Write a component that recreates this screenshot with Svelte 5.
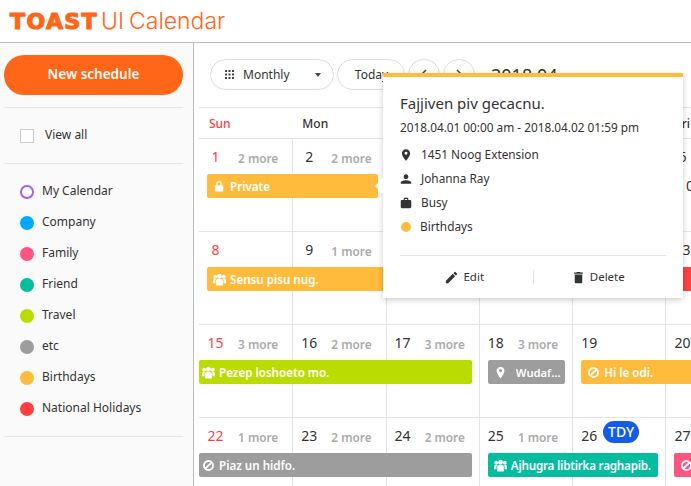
<script>
	const calendars = [
		{ name: 'My Calendar', color: '#9e5fff', ring: true },
		{ name: 'Company', color: '#00a9ff' },
		{ name: 'Family', color: '#ff5583' },
		{ name: 'Friend', color: '#03bd9e' },
		{ name: 'Travel', color: '#bbdc00' },
		{ name: 'etc', color: '#9d9d9d' },
		{ name: 'Birthdays', color: '#ffbb3b' },
		{ name: 'National Holidays', color: '#ff4040' }
	];

	const days = ['Sun', 'Mon', 'Tue', 'Wed', 'Thu', 'Fri', 'Sat'];

	const weeks = [
		{
			dates: [[1, 2], [2, 2], [3, 0], [4, 0], [5, 0], [6, 0], [7, 0]],
			events: []
		},
		{
			dates: [[8, 0], [9, 1], [10, 0], [11, 0], [12, 0], [13, 0], [14, 0]],
			events: [
				{ start: 1, span: 4, color: '#ffbb3b', icon: 'group', title: 'Sensu pisu nug.' },
				{ start: 5, span: 3, color: '#ff4040', icon: 'ban', title: 'Holiday' }
			]
		},
		{
			dates: [[15, 3], [16, 2], [17, 3], [18, 3], [19, 0], [20, 0], [21, 0]],
			events: [
				{ start: 1, span: 3, color: '#bbdc00', icon: 'group', title: 'Pezep loshoeto mo.', cont: true, drag: true },
				{ start: 4, span: 1, color: '#9d9d9d', icon: 'pin', title: 'Wudafv hoku bo.', drag: true, short: true },
				{ start: 5, span: 3, color: '#ffbb3b', icon: 'ban', title: 'Hi le odi.' }
			]
		},
		{
			dates: [[22, 1], [23, 2], [24, 2], [25, 1], [26, 0, true], [27, 0], [28, 0]],
			events: [
				{ start: 1, span: 3, color: '#9d9d9d', icon: 'ban', title: 'Piaz un hidfo.', cont: true },
				{ start: 4, span: 2, color: '#03bd9e', icon: 'group', title: 'Ajhugra libtirka raghapib.', drag: true, tight: true },
				{ start: 6, span: 2, color: '#ff5583', icon: 'ban', title: 'Ohe ditu.' }
			]
		}
	];
</script>

{#snippet eventIcon(name)}
	<svg class="ev-icon {name}" viewBox="0 0 14 14" fill="#fff">
		{#if name === 'group'}
			<circle cx="7" cy="3.4" r="2.5" />
			<circle cx="2.3" cy="4" r="2" />
			<circle cx="11.7" cy="4" r="2" />
			<path d="M3.4 13.500V8.500C3.4 6.900 4.600 6.300 7 6.300s3.600.6 3.600 2.200v5z" />
			<path d="M0 11V8c0-1.200.9-1.800 2.400-1.800.4 0 .7 0 1 .1-.5.5-.8 1.200-.8 2.100V11z" />
			<path d="M14 11V8c0-1.200-.9-1.800-2.400-1.800-.4 0-.7 0-1 .1.500.5.8 1.200.8 2.100V11z" />
		{:else if name === 'ban'}
			<circle cx="7" cy="7" r="4.9" fill="none" stroke="#fff" stroke-width="2" />
			<path d="M3.600 10.400l6.800-6.800" stroke="#fff" stroke-width="2" />
		{:else if name === 'pin'}
			<path d="M7 1C4.600 1 2.800 2.800 2.800 5.200 2.800 8.400 7 13.400 7 13.400s4.200-5 4.200-8.200C11.200 2.800 9.400 1 7 1zm0 5.800a1.600 1.600 0 1 1 0-3.200 1.600 1.600 0 0 1 0 3.200z" />
		{:else if name === 'lock'}
			<path d="M3 6h.8V4.300a3.200 3.200 0 0 1 6.400 0V6h.8c.6 0 1 .4 1 1v5.500c0 .6-.4 1-1 1H3c-.6 0-1-.4-1-1V7c0-.6.4-1 1-1zm2.200 0h3.600V4.300a1.800 1.800 0 0 0-3.600 0z" />
		{/if}
	</svg>
{/snippet}

<div class="page">
	<header class="top">
		<span class="logo-toast">TOAST</span>
		<span class="logo-ui">UI</span>
		<span class="logo-cal">Calendar</span>
	</header>

	<div class="body">
		<aside class="side">
			<button class="new-btn">New schedule</button>
			<div class="view-all">
				<span class="check"></span>
				<span class="lift">View all</span>
			</div>
			<ul class="cal-list">
				{#each calendars as c}
					<li>
						<span
							class="dot"
							class:ring={c.ring}
							style="border-color: {c.color}; background: {c.ring ? '#fff' : c.color}"
						></span>
						<span class="lift">{c.name}</span>
					</li>
				{/each}
			</ul>
		</aside>

		<main class="main">
			<div class="toolbar">
				<button class="pill monthly">
					<svg class="grid-ic" viewBox="0 0 9 9" fill="#444">
						{#each [0, 3.5, 7] as y}
							{#each [0, 3.5, 7] as x}
								<rect {x} {y} width="2" height="2" />
							{/each}
						{/each}
					</svg>
					<span>Monthly</span>
					<span class="caret"></span>
				</button>
				<button class="pill today">Today</button>
				<button class="pill round">
					<svg viewBox="0 0 10 14" width="10" height="14"><path d="M7 2L2 7l5 5" fill="none" stroke="#444" stroke-width="1.5" /></svg>
				</button>
				<button class="pill round">
					<svg viewBox="0 0 10 14" width="10" height="14"><path d="M3 2l5 5-5 5" fill="none" stroke="#444" stroke-width="1.5" /></svg>
				</button>
				<span class="range">2018.04</span>
			</div>

			<div class="calendar">
				<div class="weekdays">
					{#each days as d, i}
						<div class="weekday" class:sun={i === 0}>{d}</div>
					{/each}
				</div>

				{#each weeks as w}
					<div class="week">
						{#each w.dates as [n, more, today], i}
							<div class="cell" style="grid-column: {i + 1}">
								<span class="num" class:sun={i === 0}>{n}</span>
								{#if today}<span class="tdy">TDY</span>{/if}
								{#if more}<span class="more">{more} more</span>{/if}
							</div>
						{/each}
						{#each w.events as e}
							<div
								class="event"
								class:cont={e.cont}
								class:first={e.start === 1}
								class:short={e.short}
								class:tight={e.tight}
								style="grid-column: {e.start} / span {e.span}; background: {e.color}"
							>
								{@render eventIcon(e.icon)}
								<span class="ev-title">{e.title}</span>
								{#if e.drag}<span class="drag"></span>{/if}
							</div>
						{/each}
					</div>
				{/each}
			</div>
		</main>
	</div>

	<!-- the first week's long schedule and the popup sit over the grid -->
	<div class="event selected">
		{@render eventIcon('lock')}
		<span class="ev-title">Private</span>
	</div>
	<span class="stray">00</span>

	<div class="popup">
		<span class="arrow"></span>
		<div class="pop-title">Fajjiven piv gecacnu.</div>
		<div class="pop-time">2018.04.01 00:00 am - 2018.04.02 01:59 pm</div>
		<ul class="pop-rows">
			<li>
				<svg viewBox="0 0 24 24"><path d="M12 2C8.130 2 5 5.130 5 9c0 5.250 7 13 7 13s7-7.750 7-13c0-3.870-3.130-7-7-7zm0 9.500a2.500 2.500 0 1 1 0-5 2.500 2.500 0 0 1 0 5z" /></svg>
				<span class="lift">1451 Noog Extension</span>
			</li>
			<li>
				<svg viewBox="0 0 24 24"><path d="M12 12c2.210 0 4-1.790 4-4s-1.790-4-4-4-4 1.790-4 4 1.790 4 4 4zm0 2c-2.670 0-9 1.340-9 4v2h18v-2c0-2.660-6.330-4-9-4z" /></svg>
				<span class="lift">Johanna Ray</span>
			</li>
			<li>
				<svg viewBox="0 0 24 24"><path d="M8 7V5c0-1.100.9-2 2-2h4c1.100 0 2 .9 2 2v2h3c1.100 0 2 .9 2 2v10c0 1.100-.9 2-2 2H5c-1.100 0-2-.9-2-2V9c0-1.100.9-2 2-2zm2 0h4V5h-4z" /></svg>
				<span class="lift">Busy</span>
			</li>
			<li>
				<span class="pop-dot"></span>
				<span class="lift">Birthdays</span>
			</li>
		</ul>
		<div class="pop-actions">
			<button>
				<svg viewBox="0 0 24 24"><path d="M3 17.250V21h3.750L17.810 9.940l-3.750-3.750L3 17.250zM20.710 7.040a1 1 0 0 0 0-1.410l-2.340-2.340a1 1 0 0 0-1.410 0l-1.830 1.830 3.750 3.750 1.830-1.830z" /></svg>
				<span class="lift">Edit</span>
			</button>
			<span class="pop-sep"></span>
			<button>
				<svg viewBox="0 0 24 24"><path d="M6 19c0 1.100.9 2 2 2h8c1.100 0 2-.9 2-2V7H6v12zM19 4h-3.500l-1-1h-5l-1 1H5v2h14V4z" /></svg>
				<span class="lift">Delete</span>
			</button>
		</div>
	</div>
</div>

<style>
	:global(body) {
		margin: 0;
		font-family: 'Noto Sans', sans-serif;
		color: #333;
	}

	.page {
		position: relative;
		width: 691px;
		height: 486px;
		overflow: hidden;
		background: #fff;
	}

	button {
		font-family: inherit;
		color: #333;
		background: none;
		border: 0;
		padding: 0;
	}

	ul {
		list-style: none;
		margin: 0;
		padding: 0;
	}

	.lift {
		margin-bottom: 2px;
	}

	/* header */
	.top {
		height: 42px;
		border-bottom: 1px solid #bbb;
		display: flex;
		align-items: center;
		padding-left: 10px;
		color: #ff6618;
		white-space: nowrap;
	}

	.logo-toast {
		font-family: 'DejaVu Sans', sans-serif;
		font-weight: 700;
		font-size: 22px;
		letter-spacing: 1.4px;
		-webkit-text-stroke: 1.2px #ff6618;
		width: 91px;
	}

	.logo-ui,
	.logo-cal {
		font-family: Inter, sans-serif;
		font-weight: 300;
		font-size: 23px;
	}

	.logo-ui {
		width: 28px;
	}

	/* sidebar */
	.body {
		display: flex;
		height: 443px;
	}

	.side {
		flex: none;
		box-sizing: border-box;
		width: 194px;
		padding: 12px 10px 0 4px;
		background: #fafafa;
		border-right: 1px solid #bbb;
	}

	.new-btn {
		display: block;
		width: 179px;
		height: 40px;
		padding-bottom: 2px;
		border-radius: 20px;
		background: #ff6618;
		color: #fff;
		font-size: 13.5px;
		font-weight: 600;
	}

	.view-all {
		display: flex;
		align-items: center;
		gap: 11px;
		height: 55px;
		margin-top: 12px;
		padding-left: 16px;
		border-top: 1px solid #e5e5e5;
		border-bottom: 1px solid #e5e5e5;
		font-size: 12px;
	}

	.check {
		width: 12px;
		height: 12px;
		border: 1px solid #ccc;
		background: #fff;
	}

	.cal-list {
		padding: 12px 0 12px 16px;
		border-bottom: 1px solid #e5e5e5;
	}

	.cal-list li {
		display: flex;
		align-items: center;
		gap: 8px;
		height: 31px;
		font-size: 12px;
	}

	.dot {
		box-sizing: border-box;
		width: 14px;
		height: 14px;
		border-radius: 50%;
		border: 2px solid;
	}

	/* toolbar */
	.main {
		flex: none;
		width: 660px;
		padding-left: 5px;
	}

	.toolbar {
		display: flex;
		align-items: center;
		gap: 3px;
		height: 31px;
		padding: 16px 0 17px 11px;
		font-size: 12px;
	}

	.pill {
		box-sizing: border-box;
		display: flex;
		align-items: center;
		height: 31px;
		border: 1px solid #ddd;
		border-radius: 16px;
		font-size: 12px;
		background: #fff;
	}

	.monthly {
		width: 124px;
		padding: 0 12px 0 14px;
	}

	.grid-ic {
		width: 9px;
		height: 9px;
		margin-right: 9px;
	}

	.caret {
		margin-left: auto;
		border: 3px solid transparent;
		border-top: 4px solid #444;
		border-bottom: 0;
	}

	.today {
		width: 68px;
		justify-content: center;
		padding-left: 1px;
	}

	.round {
		width: 32px;
		justify-content: center;
	}

	.range {
		margin-left: 13px;
		font-size: 18px;
		line-height: 24px;
	}

	/* month grid */
	.calendar {
		width: 653px;
	}

	.weekdays,
	.week {
		display: grid;
		grid-template-columns: repeat(7, 1fr);
		border-top: 1px solid #e5e5e5;
	}

	.weekdays {
		height: 30px;
	}

	.weekday {
		padding-left: 10px;
		font-size: 12px;
		font-weight: 500;
		line-height: 31px;
	}

	.sun {
		color: #ff4040;
	}

	.week {
		height: 92px;
		grid-template-rows: 35px 24px 1fr;
	}

	.cell {
		grid-row: 1 / 4;
		display: flex;
		align-items: flex-start;
		border-left: 1px solid #e5e5e5;
		padding-top: 8px;
		min-width: 0;
	}

	.cell:first-child {
		border-left: 0;
	}

	.num {
		width: 32px;
		text-align: center;
		font-size: 14px;
		line-height: 20px;
	}

	.cell:first-child .num {
		width: 33px;
	}

	.more {
		margin-left: auto;
		padding: 1px 14px 0 0;
		font-size: 11.8px;
		font-weight: 600;
		line-height: 20px;
		color: #aaa;
	}

	.tdy {
		margin: -5px 0 0 -2px;
		width: 36px;
		height: 22px;
		border-radius: 11px;
		background: #135de6;
		color: #fff;
		font-size: 14px;
		font-weight: 500;
		line-height: 22px;
		text-align: center;
	}

	.event {
		grid-row: 2;
		display: flex;
		align-items: center;
		height: 24px;
		margin: 0 7px 0 9px;
		padding-left: 6px;
		border-radius: 2px;
		color: #fff;
		font-size: 11.6px;
		font-weight: 600;
		min-width: 0;
		overflow: hidden;
		position: relative;
	}

	.event.first {
		margin-left: 8px;
	}

	.event.cont {
		margin-left: 0;
		padding-left: 3px;
	}

	.ev-icon {
		flex: none;
		width: 13px;
		height: 13px;
		margin-right: 4px;
	}

	.ev-icon.pin {
		margin-right: 9px;
	}

	.ev-title {
		white-space: nowrap;
		overflow: hidden;
		text-overflow: ellipsis;
		padding-right: 2px;
	}

	.event.tight .ev-title {
		letter-spacing: -0.2px;
		padding-right: 0;
	}

	.event.short .ev-title {
		font-size: 11.2px;
	}

	.drag {
		position: absolute;
		right: 0;
		top: 7px;
		width: 4px;
		height: 10px;
		background-image: radial-gradient(#fff 0.6px, transparent 0.7px);
		background-size: 2px 2px;
	}

	/* overlays */
	.selected {
		position: absolute;
		left: 207px;
		top: 174px;
		width: 171px;
		box-sizing: border-box;
		margin: 0;
		background: #ffbb3b;
	}

	.selected .ev-icon {
		width: 12px;
		height: 12px;
		margin-right: 5px;
	}

	.stray {
		position: absolute;
		left: 686px;
		top: 176px;
		font-size: 14px;
		line-height: 20px;
	}

	.popup {
		position: absolute;
		left: 383px;
		top: 73px;
		box-sizing: border-box;
		width: 300px;
		height: 225px;
		padding: 17px 17px 0;
		background: #fff;
		border-top: 4px solid #ffbb3b;
		box-shadow: 0 2px 6px rgba(0, 0, 0, 0.2);
	}

	.arrow {
		position: absolute;
		left: -8px;
		top: 101px;
		border: 8px solid transparent;
		border-left: 0;
		border-right: 8px solid #fff;
	}

	.pop-title {
		font-size: 15px;
		line-height: 20px;
		margin-top: -1px;
	}

	.pop-time {
		margin-top: 4px;
		font-size: 11.8px;
		line-height: 20px;
	}

	.pop-rows {
		margin-top: 6px;
	}

	.pop-rows li {
		display: flex;
		align-items: center;
		gap: 8px;
		height: 24px;
		font-size: 11.8px;
	}

	.pop-rows svg {
		width: 14px;
		height: 14px;
		margin-left: -1px;
		fill: #333;
	}

	.pop-dot {
		width: 10px;
		height: 10px;
		margin: 0 1px;
		border-radius: 50%;
		background: #ffbb3b;
	}

	.pop-actions {
		display: flex;
		align-items: center;
		margin-top: 16px;
		height: 42px;
		border-top: 1px solid #e5e5e5;
	}

	.pop-actions button {
		flex: 1;
		display: flex;
		align-items: center;
		justify-content: center;
		gap: 4px;
		padding-right: 4px;
		font-size: 11.5px;
	}

	.pop-actions svg {
		width: 15px;
		height: 15px;
		fill: #333;
	}

	.pop-sep {
		width: 1px;
		height: 14px;
		background: #e5e5e5;
	}
</style>
